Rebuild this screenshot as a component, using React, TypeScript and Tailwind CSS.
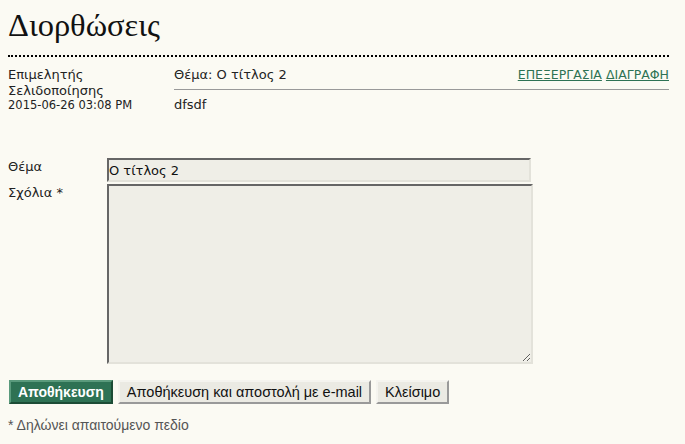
import React from "react";

export default function App() {
  return (
    <div className="min-h-[444px] w-[685px] bg-[#fbfaf3] text-[#222] pt-[6px] px-[8px] pr-[16px]" style={{ fontFamily: '"DejaVu Sans", Verdana, sans-serif' }}>
      <h1 className="text-[32.5px] leading-[39px] text-[#111] font-normal pb-[10px] border-b-2 border-dotted border-black" style={{ fontFamily: '"Liberation Serif", "Times New Roman", serif' }}>
        Διορθώσεις
      </h1>
      <div className="flex mt-[10px]">
        <div className="w-[166px] shrink-0">
          <div className="text-[13px] leading-[16px]">Επιμελητής<br />Σελιδοποίησης</div>
          <div className="text-[11.5px] leading-[12px]">2015-06-26 03:08 PM</div>
        </div>
        <div className="flex-1">
          <div className="flex justify-between items-baseline border-b border-[#999] pb-[6px]">
            <span className="text-[13px] leading-[16px]">Θέμα: Ο τίτλος 2</span>
            <span className="text-[12.5px] leading-[14px] text-[#2e7254]">
              <a className="underline">ΕΠΕΞΕΡΓΑΣΙΑ</a> <a className="underline">ΔΙΑΓΡΑΦΗ</a>
            </span>
          </div>
          <div className="text-[13px] leading-[16px] mt-[7px]">dfsdf</div>
        </div>
      </div>
      <div className="mt-[45px] flex flex-col gap-[2px]">
        <div className="flex">
          <label className="w-[99px] shrink-0 text-[13px] leading-[16px] pt-[1px]">Θέμα</label>
          <input readOnly value="Ο τίτλος 2" className="w-[424px] h-[24px] bg-[#efeee7] border-2 border-t-[#666] border-l-[#666] border-r-[#e3e2da] border-b-[#e3e2da] px-[0px] text-[13px] text-[#111] outline-none" style={{ fontFamily: '"DejaVu Sans", Verdana, sans-serif' }} />
        </div>
        <div className="flex">
          <label className="w-[99px] shrink-0 text-[13px] leading-[16px] pt-[1px]">Σχόλια *</label>
          <textarea readOnly className="w-[426px] h-[180px] bg-[#efeee7] border-2 border-t-[#666] border-l-[#666] border-r-[#e3e2da] border-b-[#e3e2da] outline-none resize" />
        </div>
      </div>
      <div className="flex gap-[5px] mt-[16px] ml-[1px]" style={{ fontFamily: '"Liberation Sans", Arial, sans-serif' }}>
        <button className="h-[24px] px-[7px] bg-[#2e7254] text-white font-bold text-[14px] border-2 border-t-[#5a9a7c] border-l-[#5a9a7c] border-r-[#1c4c36] border-b-[#1c4c36]">Αποθήκευση</button>
        <button className="h-[24px] px-[7px] bg-[#ebeae3] text-[#111] text-[14.5px] border-2 border-t-[#f5f4ef] border-l-[#f5f4ef] border-r-[#999] border-b-[#999]">Αποθήκευση και αποστολή με e-mail</button>
        <button className="h-[24px] px-[7px] bg-[#ebeae3] text-[#111] text-[14.5px] border-2 border-t-[#f5f4ef] border-l-[#f5f4ef] border-r-[#999] border-b-[#999]">Κλείσιμο</button>
      </div>
      <div className="mt-[13px] text-[14px] leading-[16px] text-[#555]" style={{ fontFamily: '"Liberation Sans", Arial, sans-serif' }}>* Δηλώνει απαιτούμενο πεδίο</div>
    </div>
  );
}
